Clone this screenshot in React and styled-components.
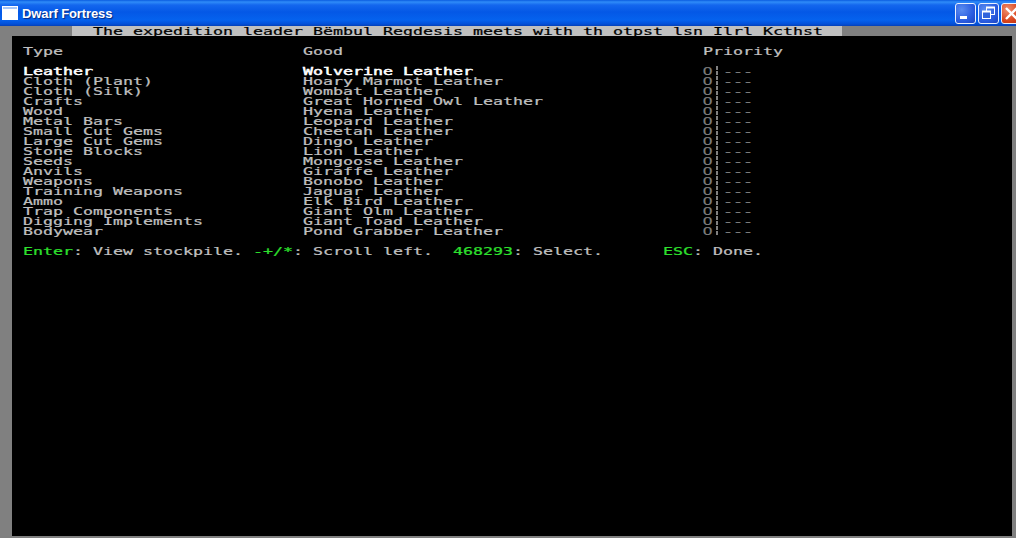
import React from 'react'
import styled, { createGlobalStyle } from 'styled-components'

const rows = [
  ['Leather', 'Wolverine Leather'],
  ['Cloth (Plant)', 'Hoary Marmot Leather'],
  ['Cloth (Silk)', 'Wombat Leather'],
  ['Crafts', 'Great Horned Owl Leather'],
  ['Wood', 'Hyena Leather'],
  ['Metal Bars', 'Leopard Leather'],
  ['Small Cut Gems', 'Cheetah Leather'],
  ['Large Cut Gems', 'Dingo Leather'],
  ['Stone Blocks', 'Lion Leather'],
  ['Seeds', 'Mongoose Leather'],
  ['Anvils', 'Giraffe Leather'],
  ['Weapons', 'Bonobo Leather'],
  ['Training Weapons', 'Jaguar Leather'],
  ['Ammo', 'Elk Bird Leather'],
  ['Trap Components', 'Giant Olm Leather'],
  ['Digging Implements', 'Giant Toad Leather'],
  ['Bodywear', 'Pond Grabber Leather'],
]

const GlobalStyle = createGlobalStyle`
  html, body {
    margin: 0;
    padding: 0;
    background: #000;
    overflow: hidden;
  }
`

const Window = styled.div`
  width: 1016px;
  height: 538px;
  display: flex;
  flex-direction: column;
  overflow: hidden;
  background: #808080;
`

const TitleBar = styled.div`
  height: 26px;
  flex: none;
  display: flex;
  align-items: center;
  padding-left: 2px;
  background: linear-gradient(
    180deg,
    #0a5ce0 0,
    #2f8cf8 2px,
    #1467ee 5px,
    #0458e6 12px,
    #0562ee 20px,
    #0350d8 24px,
    #0440b8 26px
  );
`

const AppIcon = styled.svg`
  width: 16px;
  height: 16px;
  flex: none;
  margin-right: 4px;
`

const Title = styled.span`
  flex: 1;
  color: #fff;
  font: bold 13px 'Liberation Sans', sans-serif;
  letter-spacing: -0.1px;
  text-shadow: 1px 1px 1px #0a2a80;
`

const Controls = styled.div`
  display: flex;
  gap: 2px;
  margin-right: -6px;
`

const ControlButton = styled.div`
  width: 21px;
  height: 21px;
  box-sizing: border-box;
  border: 1px solid #e8f0ff;
  border-radius: 3px;
  background: ${({ $danger }) =>
    $danger
      ? 'radial-gradient(circle at 30% 30%, #f09070, #d8441c 60%, #b82c08)'
      : 'radial-gradient(circle at 30% 30%, #5a8cf0, #2a5ce0 60%, #1c44c0)'};
  display: flex;
  align-items: center;
  justify-content: center;

  svg {
    width: 19px;
    height: 19px;
    display: block;
  }
`

const Content = styled.div`
  flex: 1;
  min-height: 0;
  display: flex;
  flex-direction: column;
  padding: 0 4px 2px 2px;
  background: #808080;
`

const AnnouncementRow = styled.div`
  height: 10px;
  flex: none;
  padding-left: 70px;
  display: flex;
`

const Announcement = styled.div`
  width: 770px;
  height: 10px;
  padding-left: 20px;
  box-sizing: border-box;
  background: #c0c0c0;
  color: #000;
`

const Screen = styled.div`
  flex: 1;
  min-height: 0;
  margin-left: 10px;
  padding: 10px 0 0 10px;
  background: #000;
  color: #c0c0c0;
`

// DF's cells are 10x10, so the font gets stretched sideways to fill them
const Text = styled.span`
  display: block;
  height: 10px;
  line-height: 10px;
  font-family: ${({ $digit }) => ($digit ? "'Liberation Sans'" : "'DejaVu Sans Mono'")}, monospace;
  font-size: 10px;
  white-space: pre;
  transform: translate(1px, 1px) scaleX(1.661);
  transform-origin: 0 0;
  color: ${({ $bright }) => ($bright ? '#fff' : 'inherit')};
  -webkit-text-stroke: ${({ $bright }) => ($bright ? '0.45px' : '0.2px')} currentColor;
`

const Row = styled.div`
  display: grid;
  grid-template-columns: 280px 400px 1fr;
  height: 10px;
`

const Spacer = styled.div`
  height: 10px;
`

const Priority = styled.div`
  display: flex;
  color: #808080;
`

const Cell = styled.div`
  width: ${({ $cells }) => $cells * 10}px;
  height: 10px;
`

const Bar = styled.div`
  width: 10px;
  height: 10px;
  position: relative;

  &::after {
    content: '';
    position: absolute;
    left: 4px;
    top: 0;
    width: 2px;
    height: 10px;
    background: repeating-linear-gradient(180deg, #808080 0 4px, #000 4px 5px);
  }
`

const Key = styled.span`
  color: #2ee02e;
`

export default function App() {
  return (
    <>
      <GlobalStyle />
      <Window>
        <TitleBar>
          <AppIcon viewBox="0 0 16 16">
            <rect x="0" y="1" width="16" height="14" fill="#fff" />
            <rect x="1" y="2" width="14" height="2" fill="#a8c8f8" />
          </AppIcon>
          <Title>Dwarf Fortress</Title>
          <Controls>
            <ControlButton>
              <svg viewBox="0 0 19 19">
                <rect x="4" y="12" width="7" height="3" fill="#fff" />
              </svg>
            </ControlButton>
            <ControlButton>
              <svg viewBox="0 0 19 19" fill="none" stroke="#fff">
                <rect x="7.5" y="3.5" width="8" height="7" />
                <rect x="3.5" y="7.5" width="8" height="7" fill="#3264dc" />
                <path d="M3 7.5h9M7 3.5h9" strokeWidth="2" />
              </svg>
            </ControlButton>
            <ControlButton $danger>
              <svg viewBox="0 0 19 19" stroke="#fff" strokeWidth="2.4">
                <path d="M4 4l11 11M15 4L4 15" />
              </svg>
            </ControlButton>
          </Controls>
        </TitleBar>
        <Content>
          <AnnouncementRow>
            <Announcement>
              <Text>The expedition leader Bëmbul Regdesis meets with th otpst lsn Ilrl Kcthst</Text>
            </Announcement>
          </AnnouncementRow>
          <Screen>
            <Row>
              <Text>Type</Text>
              <Text>Good</Text>
              <Text>Priority</Text>
            </Row>
            <Spacer />
            {rows.map(([type, good], i) => (
              <Row key={type}>
                <Text $bright={i === 0}>{type}</Text>
                <Text $bright={i === 0}>{good}</Text>
                <Priority>
                  <Cell $cells={1}><Text $digit>0</Text></Cell>
                  <Bar />
                  <Cell $cells={3}><Text>---</Text></Cell>
                </Priority>
              </Row>
            ))}
            <Spacer />
            <Text>
              <Key>Enter</Key>: View stockpile. <Key>-+/*</Key>: Scroll left.  <Key>468293</Key>: Select.      <Key>ESC</Key>: Done.
            </Text>
          </Screen>
        </Content>
      </Window>
    </>
  )
}
